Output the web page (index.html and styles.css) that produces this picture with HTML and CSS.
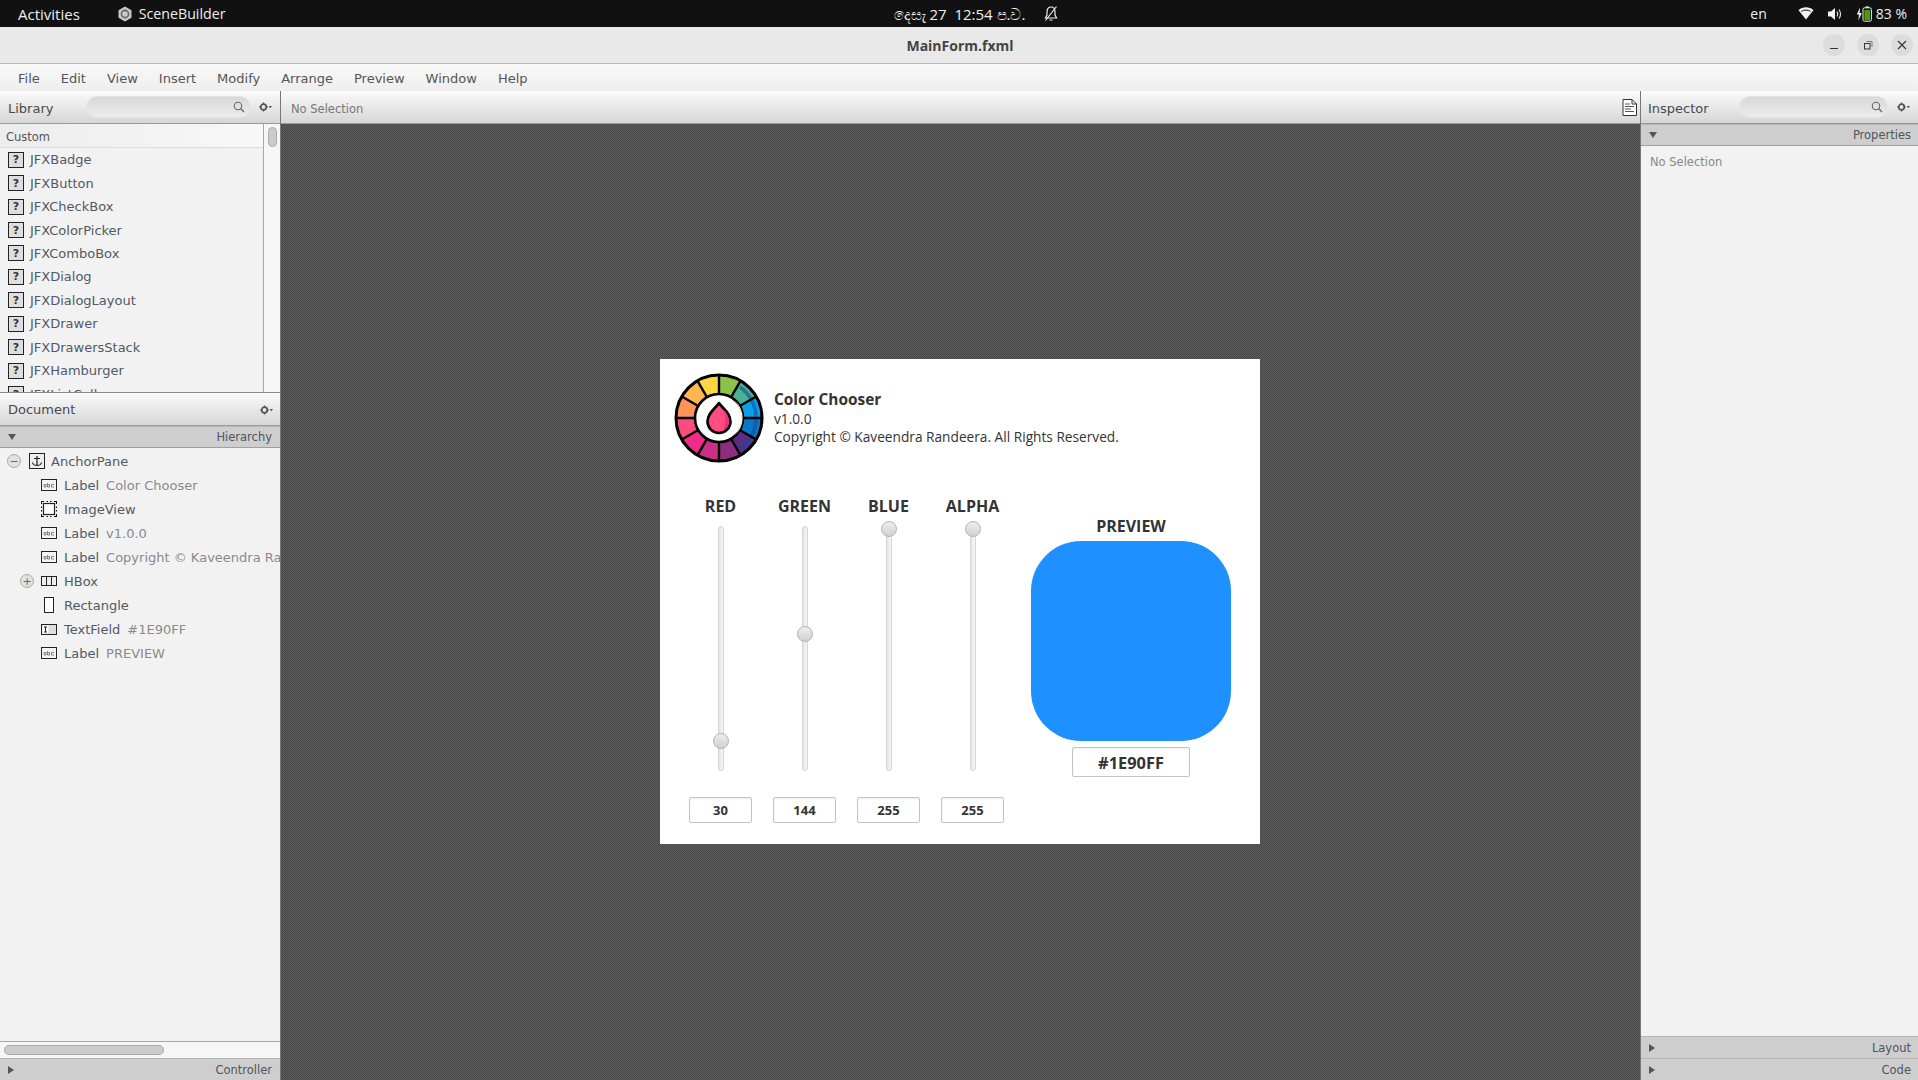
FILE: index.html
```html
<!DOCTYPE html>
<html lang="en">
<head>
<meta charset="utf-8">
<title>MainForm.fxml</title>
<link rel="stylesheet" href="styles.css">
</head>
<body>
<header class="topbar">
  <div class="top-left">
    <span class="activities">Activities</span>
    <span class="app">
      <svg class="app-icon" width="16" height="16" viewBox="0 0 16 16"><path d="M8 0.500 14.500 4.200V11.800L8 15.500 1.500 11.800V4.200Z" fill="#c9c9c9"/><circle cx="8" cy="8" r="3.600" fill="none" stroke="#666" stroke-width="1.600"/></svg>
      SceneBuilder
    </span>
  </div>
  <div class="top-center">
    <span class="clock">දෙසැ 27&nbsp; 12:54 ප.ව.</span>
    <svg class="bell" width="16" height="18" viewBox="0 0 16 18"><path d="M8 2C5.200 2 4 4.200 4 7v3l-1.600 3h11.200L12 10V7c0-2.800-1.200-5-4-5ZM6.500 15h3" fill="none" stroke="#eee" stroke-width="1.200"/><path d="M2.500 15.500 13.500 1.500" stroke="#eee" stroke-width="1.200"/></svg>
  </div>
  <div class="top-right">
    <span class="lang">en</span>
    <svg width="16" height="13" viewBox="0 0 16 13"><path d="M0.500 3.200C4.800-0.600 11.200-0.600 15.500 3.200L8 12.500Z" fill="#f2f2f2"/><path d="M3.400 4.400C6 2.600 10 2.600 12.600 4.400" fill="none" stroke="#111" stroke-width="1"/></svg>
    <svg width="16" height="16" viewBox="0 0 16 16"><path d="M1 5.500H4L8 2V14L4 10.500H1Z" fill="#f2f2f2"/><path d="M10 5.500C11 7 11 9 10 10.500M12 3.500C14 6 14 10 12 12.500" fill="none" stroke="#eee" stroke-width="1.100"/></svg>
    <span class="battery-group">
      <svg width="16" height="16" viewBox="0 0 16 16"><path d="M4 1 0.800 8H3L2.400 14 5.800 6.600H3.600Z" fill="#f2f2f2" transform="translate(0 0.500)"/><rect x="7" y="1.800" width="8.400" height="13.400" rx="1.600" fill="none" stroke="#eee" stroke-width="1"/><rect x="9.500" y="0.400" width="3.400" height="1.400" fill="#eee"/><rect x="8.400" y="4" width="5.600" height="10" fill="#4c9a06"/></svg>
      <span class="pct">83 %</span>
    </span>
  </div>
</header>

<div class="titlebar">
  <span class="title">MainForm.fxml</span>
  <div class="win-controls">
    <span class="win-btn"><svg width="12" height="12" viewBox="0 0 12 12"><path d="M2 9.500H10" stroke="#333" stroke-width="1"/></svg></span>
    <span class="win-btn"><svg width="12" height="12" viewBox="0 0 12 12"><rect x="2.500" y="4.500" width="5.500" height="5.500" fill="none" stroke="#333"/><path d="M4.500 2.500H10V8" fill="none" stroke="#777"/></svg></span>
    <span class="win-btn"><svg width="12" height="12" viewBox="0 0 12 12"><path d="M2 2 10 10M10 2 2 10" stroke="#333" stroke-width="1.100"/></svg></span>
  </div>
</div>

<nav class="menubar">
  <span>File</span><span>Edit</span><span>View</span><span>Insert</span><span>Modify</span><span>Arrange</span><span>Preview</span><span>Window</span><span>Help</span>
</nav>

<main class="workspace">
  <aside class="left">
    <section class="library">
      <div class="panel-head">
        <span class="panel-title">Library</span>
        <div class="search lib-search"><svg width="12" height="12" viewBox="0 0 12 12"><circle cx="5" cy="5" r="3.700" fill="none" stroke="#666" stroke-width="1.100"/><path d="M7.800 7.800 11 11" stroke="#666" stroke-width="1.300"/></svg></div>
        <svg class="gear" width="13" height="10" viewBox="0 0 13 10"><circle cx="4.500" cy="5" r="2.800" fill="none" stroke="#555" stroke-width="1.700"/><path d="M4.500 0.400V2M4.500 8V9.600M0 5H1.600M7.400 5H9" stroke="#555" stroke-width="1.200"/><path d="M9.600 4H13L11.300 6.200Z" fill="#555"/></svg>
      </div>
      <div class="lib-body">
        <div class="lib-list">
          <div class="lib-section">Custom</div>
          <div class="lib-item"><span class="q">?</span>JFXBadge</div>
          <div class="lib-item"><span class="q">?</span>JFXButton</div>
          <div class="lib-item"><span class="q">?</span>JFXCheckBox</div>
          <div class="lib-item"><span class="q">?</span>JFXColorPicker</div>
          <div class="lib-item"><span class="q">?</span>JFXComboBox</div>
          <div class="lib-item"><span class="q">?</span>JFXDialog</div>
          <div class="lib-item"><span class="q">?</span>JFXDialogLayout</div>
          <div class="lib-item"><span class="q">?</span>JFXDrawer</div>
          <div class="lib-item"><span class="q">?</span>JFXDrawersStack</div>
          <div class="lib-item"><span class="q">?</span>JFXHamburger</div>
          <div class="lib-item"><span class="q">?</span>JFXListCell</div>
        </div>
        <div class="lib-scroll"><div class="lib-thumb"></div></div>
      </div>
    </section>

    <section class="document">
      <div class="panel-head doc-head">
        <span class="panel-title">Document</span>
        <svg class="gear" width="13" height="10" viewBox="0 0 13 10"><circle cx="4.500" cy="5" r="2.800" fill="none" stroke="#555" stroke-width="1.700"/><path d="M4.500 0.400V2M4.500 8V9.600M0 5H1.600M7.400 5H9" stroke="#555" stroke-width="1.200"/><path d="M9.600 4H13L11.300 6.200Z" fill="#555"/></svg>
      </div>
      <div class="pane-title open"><span class="tri-down"></span><span>Hierarchy</span></div>
      <div class="tree">
        <div class="tree-row lvl0">
          <span class="toggle">−</span>
          <svg class="ico" width="16" height="16" viewBox="0 0 16 16"><rect x="0.500" y="0.500" width="15" height="15" fill="#eee" stroke="#222"/><path d="M8 3V12M5 5.500H11M3.500 9.500C4 12 6 12.500 8 12.500S12 12 12.500 9.500" fill="none" stroke="#222" stroke-width="1.200"/></svg>
          <span class="tname">AnchorPane</span>
        </div>
        <div class="tree-row lvl1">
          <svg class="ico" width="16" height="12" viewBox="0 0 16 12"><use href="#abc"/></svg>
          <span class="tname">Label</span><span class="tval">Color Chooser</span>
        </div>
        <div class="tree-row lvl1">
          <svg class="ico" width="16" height="16" viewBox="0 0 16 16"><rect x="2.500" y="2.500" width="11" height="11" fill="#fff" stroke="#222" stroke-width="1.200"/><path d="M0.500 0.500H3M0.500 0.500V3M13 0.500H15.500V3M0.500 13V15.500H3M13 15.500H15.500V13M0.500 5.500V7M0.500 9V10.500M15.500 5.500V7M15.500 9V10.500M5.500 0.500H7M9 0.500H10.500M5.500 15.500H7M9 15.500H10.500" fill="none" stroke="#111" stroke-width="1.200"/></svg>
          <span class="tname">ImageView</span>
        </div>
        <div class="tree-row lvl1">
          <svg class="ico" width="16" height="12" viewBox="0 0 16 12"><use href="#abc"/></svg>
          <span class="tname">Label</span><span class="tval">v1.0.0</span>
        </div>
        <div class="tree-row lvl1">
          <svg class="ico" width="16" height="12" viewBox="0 0 16 12"><use href="#abc"/></svg>
          <span class="tname">Label</span><span class="tval">Copyright © Kaveendra Randeera. All Rights Reserved.</span>
        </div>
        <div class="tree-row lvl1 has-toggle">
          <span class="toggle">+</span>
          <svg class="ico" width="16" height="10" viewBox="0 0 16 10"><rect x="0.500" y="0.500" width="15" height="9" fill="#eee" stroke="#222"/><path d="M5.500 0.500V9.500M10.500 0.500V9.500" stroke="#222"/></svg>
          <span class="tname">HBox</span>
        </div>
        <div class="tree-row lvl1">
          <svg class="ico" width="16" height="16" viewBox="0 0 16 16"><rect x="3.500" y="0.500" width="9" height="15" fill="#fff" stroke="#222"/></svg>
          <span class="tname">Rectangle</span>
        </div>
        <div class="tree-row lvl1">
          <svg class="ico" width="16" height="11" viewBox="0 0 16 11"><rect x="0.500" y="0.500" width="15" height="10" fill="#ddd" stroke="#222"/><rect x="1.500" y="1.500" width="6" height="8" fill="#fff"/><path d="M3 3H6M4.500 3V8M3 8H6" stroke="#222"/></svg>
          <span class="tname">TextField</span><span class="tval">#1E90FF</span>
        </div>
        <div class="tree-row lvl1">
          <svg class="ico" width="16" height="12" viewBox="0 0 16 12"><use href="#abc"/></svg>
          <span class="tname">Label</span><span class="tval">PREVIEW</span>
        </div>
      </div>
      <div class="h-scroll"><div class="h-thumb"></div></div>
      <div class="pane-title closed"><span class="tri-right"></span><span>Controller</span></div>
    </section>
  </aside>

  <section class="center">
    <div class="content-head">
      <span class="no-sel">No Selection</span>
      <svg width="15" height="17" viewBox="0 0 15 17"><path d="M1 0.500H10L14.500 5V16.500H1Z" fill="#fff" stroke="#333"/><path d="M10 0.500V5H14.500" fill="none" stroke="#333"/><path d="M3 5H8M3 7.500H12M3 10H9M3 12.500H12" stroke="#555"/></svg>
    </div>
    <div class="canvas">
      <article class="dialog">
        <div class="about">
          <svg class="logo" width="90" height="90" viewBox="0 0 90 90">
            <g fill="none" stroke-width="22">
              <circle class="w" cx="45" cy="45" r="32" pathLength="12" stroke="#8BC34A" transform="rotate(-90 45 45)"/>
              <circle class="w" cx="45" cy="45" r="32" pathLength="12" stroke="#4CAF93" transform="rotate(-60 45 45)"/>
              <circle class="w" cx="45" cy="45" r="32" pathLength="12" stroke="#0E9FE8" transform="rotate(-30 45 45)"/>
              <circle class="w" cx="45" cy="45" r="32" pathLength="12" stroke="#0A78C5" transform="rotate(0 45 45)"/>
              <circle class="w" cx="45" cy="45" r="32" pathLength="12" stroke="#5C2D82" transform="rotate(30 45 45)"/>
              <circle class="w" cx="45" cy="45" r="32" pathLength="12" stroke="#8E2D80" transform="rotate(60 45 45)"/>
              <circle class="w" cx="45" cy="45" r="32" pathLength="12" stroke="#C92F86" transform="rotate(90 45 45)"/>
              <circle class="w" cx="45" cy="45" r="32" pathLength="12" stroke="#F02C8A" transform="rotate(120 45 45)"/>
              <circle class="w" cx="45" cy="45" r="32" pathLength="12" stroke="#FA4C7E" transform="rotate(150 45 45)"/>
              <circle class="w" cx="45" cy="45" r="32" pathLength="12" stroke="#FF9459" transform="rotate(180 45 45)"/>
              <circle class="w" cx="45" cy="45" r="32" pathLength="12" stroke="#FFB74D" transform="rotate(210 45 45)"/>
              <circle class="w" cx="45" cy="45" r="32" pathLength="12" stroke="#FFD640" transform="rotate(240 45 45)"/>
            </g>
            <path d="M66 14A38 38 0 0 1 66 76" fill="none" stroke="#0b4f9e" stroke-width="3.500" opacity=".6"/>
            <g stroke="#000" stroke-width="2.400">
              <path d="M45 2V88M2 45H88M23.500 7.800 66.500 82.200M7.800 23.500 82.200 66.500M66.500 7.800 23.500 82.200M82.200 23.500 7.800 66.500"/>
            </g>
            <circle cx="45" cy="45" r="43" fill="none" stroke="#000" stroke-width="3"/>
            <circle cx="45" cy="45" r="24" fill="#fff" stroke="#000" stroke-width="2.600"/>
            <path d="M60 27A23 23 0 0 1 60 63A26 26 0 0 0 60 27Z" fill="#FFF1C9"/>
            <path d="M45 30C41 36 33.500 40 33.500 48.500A11.500 11.500 0 0 0 56.500 48.500C56.500 40 49 36 45 30Z" fill="#FF4D80" stroke="#000" stroke-width="2.600" stroke-linejoin="round"/>
            <path d="M50 37C53 40 55 44 55 48.500A10 10 0 0 1 49 57.500C52 50 52 44 50 37Z" fill="#F02C8A"/>
          </svg>
          <div class="about-text">
            <div class="app-name">Color Chooser</div>
            <div class="about-line">v1.0.0</div>
            <div class="about-line">Copyright © Kaveendra Randeera. All Rights Reserved.</div>
          </div>
        </div>
        <div class="controls">
          <div class="channels">
            <div class="channel">
              <div class="ch-label">RED</div>
              <div class="slider"><div class="track"></div><div class="thumb" style="top:207px"></div></div>
              <div class="field">30</div>
            </div>
            <div class="channel">
              <div class="ch-label">GREEN</div>
              <div class="slider"><div class="track"></div><div class="thumb" style="top:100px"></div></div>
              <div class="field">144</div>
            </div>
            <div class="channel">
              <div class="ch-label">BLUE</div>
              <div class="slider"><div class="track"></div><div class="thumb" style="top:-5px"></div></div>
              <div class="field">255</div>
            </div>
            <div class="channel">
              <div class="ch-label">ALPHA</div>
              <div class="slider"><div class="track"></div><div class="thumb" style="top:-5px"></div></div>
              <div class="field">255</div>
            </div>
          </div>
          <div class="preview">
            <div class="ch-label pv-label">PREVIEW</div>
            <div class="swatch"></div>
            <div class="field hex">#1E90FF</div>
          </div>
        </div>
      </article>
    </div>
  </section>

  <aside class="right">
    <div class="panel-head">
      <span class="panel-title">Inspector</span>
      <div class="search insp-search"><svg width="12" height="12" viewBox="0 0 12 12"><circle cx="5" cy="5" r="3.700" fill="none" stroke="#666" stroke-width="1.100"/><path d="M7.800 7.800 11 11" stroke="#666" stroke-width="1.300"/></svg></div>
      <svg class="gear" width="13" height="10" viewBox="0 0 13 10"><circle cx="4.500" cy="5" r="2.800" fill="none" stroke="#555" stroke-width="1.700"/><path d="M4.500 0.400V2M4.500 8V9.600M0 5H1.600M7.400 5H9" stroke="#555" stroke-width="1.200"/><path d="M9.600 4H13L11.300 6.200Z" fill="#555"/></svg>
    </div>
    <div class="pane-title open"><span class="tri-down"></span><span>Properties</span></div>
    <div class="insp-body">No Selection</div>
    <div class="pane-title closed"><span class="tri-right"></span><span>Layout</span></div>
    <div class="pane-title closed"><span class="tri-right"></span><span>Code</span></div>
  </aside>
</main>

<svg class="defs" width="0" height="0">
  <symbol id="abc" viewBox="0 0 16 12"><rect x="0.500" y="0.500" width="15" height="11" fill="#f4f4f4" stroke="#222"/><path d="M3 8V5.500H5V8H3M6.500 4V8H8.500V5.500H6.500M13 5.500H10.500V8H13" fill="none" stroke="#777" stroke-width=".9"/></symbol>
</svg>
</body>
</html>
```

FILE: styles.css
```css
* { box-sizing: border-box; }
html, body { margin: 0; height: 100%; overflow: hidden; }
body {
  width: 1918px; height: 1080px;
  display: flex; flex-direction: column;
  font-family: "DejaVu Sans", sans-serif;
  font-size: 13px; color: #4d4d4d; background: #f2f2f2;
}

/* top bar */
.topbar {
  height: 27px; flex: none; background: #111; color: #eee;
  display: grid; grid-template-columns: 1fr auto 1fr; align-items: center;
  font-family: "Open Sans", "Noto Sans", sans-serif; font-size: 14px;
}
.top-left { display: flex; align-items: center; padding-left: 18px; gap: 37px; }
.activities { font-size: 15px; }
.app { display: flex; align-items: center; gap: 6px; font-size: 14.2px; }
.top-center { display: flex; align-items: center; gap: 18px; padding-left: 35px; }
.clock { white-space: nowrap; font-size: 15px; }
.top-right { display: flex; align-items: center; justify-content: flex-end; padding-right: 11px; gap: 13px; }
.lang { margin-right: 18px; }
.battery-group { display: flex; align-items: center; gap: 4px; }

/* title */
.titlebar {
  height: 37px; flex: none; background: #e9e9e9; border-bottom: 1px solid #b9b9b9; padding-left: 2px;
  display: flex; align-items: center; justify-content: center; position: relative;
}
.title { font-family: "Open Sans", "Noto Sans", sans-serif; font-weight: 700; font-size: 14px; color: #444; }
.win-controls { position: absolute; right: 5px; top: 7px; display: flex; gap: 12px; }
.win-btn { width: 22px; height: 22px; border-radius: 50%; background: #dcdcdc; display: flex; align-items: center; justify-content: center; }

/* menu */
.menubar {
  height: 27px; flex: none; display: flex; align-items: center; gap: 21px; padding: 2px 0 0 18px;
  background: linear-gradient(#f9f9f9, #eeeeee); color: #555;
}

.workspace { flex: 1; display: flex; min-height: 0; }
.left { width: 281px; flex: none; display: flex; flex-direction: column; border-right: 1px solid #777; background: #f2f2f2; }
.right { width: 278px; flex: none; display: flex; flex-direction: column; border-left: 1px solid #777; background: #f2f2f2; }
.center { flex: 1; display: flex; flex-direction: column; min-width: 0; }

.panel-head {
  height: 33px; flex: none; display: flex; align-items: center; padding: 0 8px;
  background: linear-gradient(#fbfbfb, #d6d6d6); border-bottom: 1px solid #9a9a9a;
  color: #4a4a4a;
}
.right .panel-head { padding-left: 7px; }
.panel-title { font-size: 13px; margin-top: 2px; }
.search {
  height: 22px; border: 1px solid #e4e4e4; border-radius: 11px;
  background: linear-gradient(#d8d8d8, #ececec);
  display: flex; align-items: center; justify-content: flex-end; padding-right: 5px;
}
.lib-search { width: 166px; margin-left: 33px; }
.insp-search { width: 151px; margin-left: 30px; padding-right: 4px; }
.gear { margin-left: 8px; flex: none; }
.right .gear { margin-left: 9px; }
.doc-head { justify-content: space-between; border-top: 1px solid #8a8a8a; height: 34px; padding: 1px 7px 0 8px; }
.doc-head .panel-title { margin-top: 0; }

.library { height: 301px; flex: none; display: flex; flex-direction: column; }
.lib-body { flex: 1; display: flex; min-height: 0; overflow: hidden; }
.lib-list { flex: 1; overflow: hidden; min-width: 0; }
.lib-section {
  height: 24px; display: flex; align-items: center; padding: 3px 0 0 6px; font-size: 11.5px; color: #555;
  background: linear-gradient(90deg, #ececec, #f8f8f8); border-bottom: 1px solid #dcdcdc;
}
.lib-item { height: 23.44px; display: flex; align-items: center; gap: 6px; padding-left: 8px; color: #505a66; }
.q {
  width: 16px; height: 16px; flex: none; border: 1px solid #222; background: #dedede;
  display: flex; align-items: center; justify-content: center; font-size: 11px; font-weight: 700; color: #333;
}
.lib-scroll { width: 17px; flex: none; border-left: 1px solid #a8a8a8; padding: 3px 3px 0 4px; background: #f6f6f6; }
.lib-thumb { height: 20px; border-radius: 5px; background: #cbcbcb; border: 1px solid #aaa; }

.document { flex: 1; display: flex; flex-direction: column; min-height: 0; }
.pane-title {
  height: 22px; flex: none; display: flex; align-items: center; justify-content: space-between;
  padding: 0 7px 0 8px; font-size: 11.5px; color: #4e5560; background: #cecece;
  border-top: 1px solid #b6b6b6;
}
.left .pane-title { padding-right: 8px; }
.pane-title.open { border-bottom: 1px solid #a0a0a0; }
.tri-down { width: 0; height: 0; border-left: 4px solid transparent; border-right: 4px solid transparent; border-top: 6px solid #555; }
.tri-right { width: 0; height: 0; border-top: 4px solid transparent; border-bottom: 4px solid transparent; border-left: 6px solid #555; }

.tree { flex: 1; padding-top: 1px; overflow: hidden; min-height: 0; }
.tree-row { height: 24px; display: flex; align-items: center; white-space: nowrap; overflow: hidden; }
.lvl0 { padding-left: 7px; }
.lvl1 { padding-left: 41px; position: relative; }
.has-toggle { padding-left: 20px; }
.toggle {
  width: 14px; height: 14px; flex: none; border-radius: 50%; border: 1px solid #aaa; background: #e2e2e2;
  display: flex; align-items: center; justify-content: center; font-size: 11px; line-height: 1; color: #666;
}
.lvl0 .toggle { margin-right: 8px; }
.has-toggle .toggle { margin-right: 7px; }
.ico { flex: none; }
.tname { margin-left: 7px; color: #505a66; }
.lvl0 .tname { margin-left: 6px; }
.tval { margin-left: 7px; color: #8a8a8a; }
.h-scroll { height: 17px; flex: none; border-top: 1px solid #a8a8a8; padding: 3px 0 0 4px; background: #f6f6f6; }
.h-thumb { width: 160px; height: 10px; border-radius: 5px; background: #cbcbcb; border: 1px solid #aaa; }

.content-head {
  height: 33px; flex: none; display: flex; align-items: center; justify-content: space-between;
  padding: 0 3px 0 10px; background: linear-gradient(#fbfbfb, #d6d6d6); border-bottom: 1px solid #9a9a9a;
}
.no-sel { font-size: 11.5px; color: #777; margin-top: 3px; }

.canvas {
  flex: 1; display: flex; align-items: center; justify-content: center; min-height: 0;
  padding: 0 1px 1px 0;
  background-color: #525252;
  background-image: conic-gradient(#474747 25%, #5d5d5d 0 50%, #474747 0 75%, #5d5d5d 0);
  background-size: 2px 2px;
}

/* dialog */
.dialog {
  width: 600px; height: 485px; background: #fff; color: #333; flex: none;
  font-family: "Open Sans", "Noto Sans", sans-serif;
  display: flex; flex-direction: column; padding: 14px 0 0 14px;
}
.about { display: flex; align-items: center; gap: 10px; height: 90px; flex: none; }
.logo { flex: none; }
.w { stroke-dasharray: 1 11; }
.app-name { font-weight: 700; font-size: 15.4px; line-height: 20px; }
.about-line { font-size: 13.7px; line-height: 18px; }
.controls { display: flex; padding: 33px 0 0 15px; }
.channels { display: flex; gap: 21px; }
.channel { width: 63px; display: flex; flex-direction: column; align-items: center; }
.ch-label { font-weight: 700; font-size: 16px; line-height: 20px; text-align: center; }
.slider { position: relative; width: 16px; height: 245px; margin-top: 10px; display: flex; justify-content: center; }
.track {
  width: 6px; height: 100%; border-radius: 3px; border: 1px solid #d4d4d4;
  background: linear-gradient(90deg, #e4e4e4, #f8f8f8);
}
.thumb {
  position: absolute; left: 0; width: 16px; height: 16px; border-radius: 50%;
  background: linear-gradient(#eeeeee, #d0d0d0); border: 1px solid #b4b4b4;
}
.field {
  width: 63px; height: 26px; margin-top: 26px; border: 1px solid #c4c4c4; border-radius: 2px;
  background: #fff; display: flex; align-items: center; justify-content: center;
  font-weight: 700; font-size: 13px; box-shadow: inset 0 1px 2px #eee;
}
.preview { margin-left: 27px; display: flex; flex-direction: column; align-items: center; width: 200px; }
.pv-label { margin-top: 20px; }
.swatch { width: 200px; height: 200px; border-radius: 50px; background: #1E90FF; margin-top: 5px; }
.hex { width: 118px; height: 30px; margin-top: 6px; font-size: 16.4px; }

.insp-body { flex: 1; padding: 9px 0 0 9px; font-size: 11.5px; color: #888; min-height: 0; }
.defs { position: absolute; }
```
